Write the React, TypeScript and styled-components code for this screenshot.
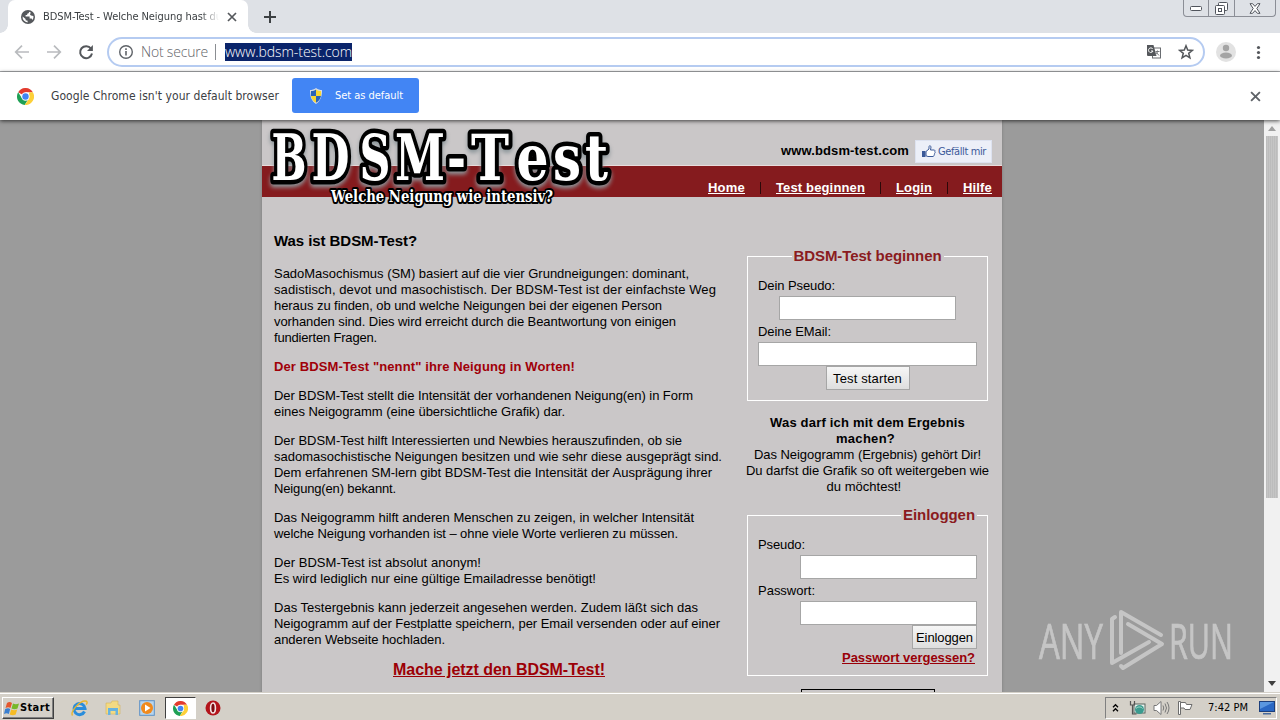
import React, { useLayoutEffect, useRef, useState } from "react";
import styled, { createGlobalStyle, css } from "styled-components";

const GlobalStyle = createGlobalStyle`
  * {
    box-sizing: border-box;
  }
  body {
    margin: 0;
    overflow: hidden;
  }
`;

const pageFont = `"Liberation Sans", Arial, sans-serif`;
const uiFont = `"DejaVu Sans Condensed", "DejaVu Sans", sans-serif`;
const lightFont = `"Open Sans", "Noto Sans", sans-serif`;

const FitSpan = styled.span`
  display: inline-block;
  white-space: pre;
  text-decoration: inherit;
`;

interface FitProps {
  width: number;
  children: string;
}

// spreads the letters of a line so that it takes up a given width
const Fit = ({ width, children }: FitProps) => {
  const ref = useRef<HTMLSpanElement>(null);
  const [spacing, setSpacing] = useState(0);

  useLayoutEffect(() => {
    if (!ref.current) return;
    ref.current.style.letterSpacing = "0px";
    const natural = ref.current.getBoundingClientRect().width;
    const next = (width - natural) / children.length;
    ref.current.style.letterSpacing = `${next}px`;
    setSpacing(next);
  }, [width, children]);

  return (
    <FitSpan ref={ref} style={{ letterSpacing: `${spacing}px` }}>
      {children}
    </FitSpan>
  );
};

const Screen = styled.div`
  display: flex;
  flex-direction: column;
  width: 1280px;
  height: 720px;
  overflow: hidden;
  background: #9b9b9b;
  color: #000;
  font-family: ${pageFont};
`;

/* ---------- browser ---------- */

const TabStrip = styled.div`
  position: relative;
  display: flex;
  flex: none;
  height: 33px;
  padding-left: 8px;
  background: #dee1e6;
`;

const Tab = styled.div`
  position: relative;
  display: flex;
  align-items: center;
  width: 240px;
  padding-left: 13px;
  border-radius: 7px 7px 0 0;
  background: #fff;
  color: #3c4043;
  font: 11px/16px ${uiFont};

  &::before,
  &::after {
    content: "";
    position: absolute;
    bottom: 0;
    width: 8px;
    height: 8px;
  }
  &::before {
    left: -8px;
    background: radial-gradient(circle at 0 0, #dee1e6 7.5px, #fff 8px);
  }
  &::after {
    right: -8px;
    background: radial-gradient(circle at 100% 0, #dee1e6 7.5px, #fff 8px);
  }
`;

const TabTitle = styled.div`
  width: 176px;
  margin-left: 8px;
  overflow: hidden;
  white-space: nowrap;
  mask-image: linear-gradient(to right, #000 158px, transparent 176px);
`;

const TabClose = styled.div`
  display: flex;
  margin-left: 8px;
`;

const NewTab = styled.div`
  display: flex;
  align-items: center;
  margin-left: 15px;
`;

const WindowButtons = styled.div`
  position: absolute;
  top: 0;
  right: 4px;
  display: flex;
  height: 17px;
  border: 1px solid #8b8e96;
  border-top: 0;
  border-radius: 0 0 4px 4px;
`;

const WindowButton = styled.div<{ $width: number }>`
  display: flex;
  align-items: center;
  justify-content: center;
  width: ${(p) => p.$width}px;

  & + & {
    border-left: 1px solid #8b8e96;
  }
`;

const Toolbar = styled.div`
  display: flex;
  flex: none;
  align-items: center;
  height: 39px;
  padding: 0 12px 0 13px;
  border-bottom: 1px solid #a9abae;
  background: #fff;
`;

const NavIcons = styled.div`
  display: flex;
  gap: 14px;
  width: 94px;
`;

const AddressBar = styled.div`
  display: flex;
  align-items: center;
  width: 1098px;
  height: 30px;
  padding: 0 9px 0 9px;
  border: 2px solid #b5cbf1;
  border-radius: 15px;
  color: #5f6368;
  font: 300 14px/18px ${lightFont};
`;

const NotSecure = styled.div`
  margin-left: 7px;
`;

const Divider = styled.div`
  width: 1px;
  height: 16px;
  margin: 0 9px 0 7px;
  background: #8b8e92;
`;

const SelectedUrl = styled.div`
  height: 18px;
  margin-right: auto;
  background: #0a246a;
  color: #fff;
`;

const BarIcon = styled.div<{ $left: number }>`
  display: flex;
  margin-left: ${(p) => p.$left}px;
`;

const InfoBar = styled.div`
  position: relative;
  z-index: 1;
  display: flex;
  flex: none;
  align-items: center;
  height: 48px;
  padding: 0 19px 0 17px;
  background: #fff;
  box-shadow: 0 1px 4px rgba(0, 0, 0, 0.7);
  color: #3c4043;
  font: 12px/16px ${uiFont};
`;

const InfoText = styled.div`
  margin: 0 13px 0 17px;
`;

const DefaultButton = styled.div`
  display: flex;
  align-items: center;
  gap: 11px;
  width: 127px;
  height: 35px;
  margin: 0 auto 1px 0;
  padding-left: 16px;
  border-radius: 3px;
  background: #4285f4;
  color: #fff;
  font-size: 11px;
`;

/* ---------- page ---------- */

const Viewport = styled.div`
  position: relative;
  display: flex;
  flex: 1;
  min-height: 0;
  overflow: hidden;
`;

const PageArea = styled.div`
  flex: 1;
  padding-left: 262px;
`;

const Column = styled.div`
  position: relative;
  width: 740px;
  height: 580px;
  background: #cac7c8;
  box-shadow: 0 0 3px rgba(0, 0, 0, 0.2);
`;

const Header = styled.div`
  display: flex;
  justify-content: flex-end;
  height: 46px;
  padding: 20px 10px 0 0;
  border-bottom: 1px solid #e9dcdc;
  font: bold 13px/21px ${pageFont};
`;

const LikeButton = styled.div`
  display: flex;
  align-items: center;
  gap: 2px;
  width: 77px;
  height: 23px;
  margin-left: 6px;
  padding-left: 6px;
  border: 1px solid #dde2f0;
  background: #eceff8;
  color: #3b5998;
  font: 11px/16px ${uiFont};
`;

const Nav = styled.div`
  display: flex;
  justify-content: flex-end;
  height: 31px;
  padding: 14px 10px 0 0;
  background: #851b1e;
  font: bold 13px/16px ${pageFont};

  a {
    height: 16px;
    color: #fff;
    text-decoration: underline;
  }
`;

const NavSeparator = styled.div`
  width: 1px;
  height: 12px;
  margin: 2px 15px 0;
  background: #2c0809;
`;

const Logo = styled.svg`
  position: absolute;
  top: 0;
  left: 0;
`;

const LogoTitle = styled.text`
  filter: drop-shadow(0 3px 2px #8b9599);
`;

const Content = styled.div`
  display: flex;
  padding: 36px 0 0 12px;
  font-size: 13px;
  line-height: 16px;
`;

const Article = styled.div`
  width: 450px;
`;

const Heading = styled.h1`
  margin: 0 0 17px;
  font-size: 15px;
  line-height: 16px;
`;

const Paragraph = styled.p<{ $accent?: boolean }>`
  margin: 0 0 13px;
  white-space: nowrap;
  ${(p) =>
    p.$accent &&
    css`
      color: #a00008;
      font-weight: bold;
    `}
`;

const Line = styled.div`
  height: 16px;
`;

const BigLink = styled.a`
  display: block;
  width: 450px;
  color: #9c0006;
  font-size: 16px;
  line-height: 18px;
  font-weight: bold;
  text-align: center;
  text-decoration: underline;
`;

const Sidebar = styled.div`
  width: 241px;
  margin: 15px 0 0 23px;
`;

const Box = styled.fieldset<{ $height: number; $align: "center" | "right" }>`
  height: ${(p) => p.$height}px;
  margin: 0 0 14px;
  padding: 14px 10px 0;
  border: 1px solid #fff;
  text-align: ${(p) => p.$align};

  legend {
    height: 16px;
    padding: 0 2px;
    margin: ${(p) => (p.$align === "center" ? "0 auto" : "0 0 0 auto")};
    color: #8a1b20;
    font-size: 15px;
    font-weight: bold;
    line-height: 16px;
  }
`;

const Label = styled.label`
  display: block;
  height: 16px;
  margin-bottom: 2px;
  text-align: left;
`;

const Input = styled.input<{ $width: number; $last?: boolean }>`
  display: block;
  width: ${(p) => p.$width}px;
  height: 24px;
  margin: 0 0 ${(p) => (p.$last ? 0 : 4)}px auto;
  border: 1px solid #a6a6a6;
  background: #fff;
`;

const FirstInput = styled(Input)`
  margin-right: 21px;
`;

const SubmitButton = styled.button<{ $width: number }>`
  display: block;
  width: ${(p) => p.$width}px;
  height: 24px;
  margin: 0 0 1px auto;
  padding: 1px 0 0;
  border: 1px solid #a6a6a6;
  background: linear-gradient(#f6f6f6, #dedede);
  font: 13px/21px ${pageFont};
`;

const StartTestButton = styled(SubmitButton)`
  margin: 0 auto;
`;

const ForgotLink = styled.a`
  display: block;
  margin-right: 2px;
  color: #990008;
  font-weight: bold;
  text-decoration: underline;
`;

const Notice = styled.div`
  display: flex;
  flex-direction: column;
  align-items: center;
  width: 243px;
  margin: 0 -1px 12px;
`;

const Banner = styled.div`
  width: 134px;
  height: 40px;
  margin: -1px auto 0;
  border: 1px solid #000;
`;

const ScrollBar = styled.div`
  display: flex;
  flex-direction: column;
  align-items: center;
  width: 16px;
  padding: 6px 0 6px;
  background: #f1f1f1;
`;

const Thumb = styled.div`
  width: 12px;
  height: 362px;
  margin: 5px 0 auto;
  background: repeating-linear-gradient(to right, #bcbcbc 0 1px, #c5c5c5 1px 2px);
`;

const Watermark = styled.svg`
  position: absolute;
  left: 1030px;
  top: 482px;
  opacity: 0.6;
`;

/* ---------- taskbar ---------- */

const TaskBar = styled.div`
  display: flex;
  flex: none;
  align-items: center;
  height: 28px;
  padding: 3px 3px 0 2px;
  border-top: 1px solid #d4d0c8;
  background: #d4d0c8;
  box-shadow: inset 0 1px 0 #fff;
  font: 11px/16px ${uiFont};
`;

const StartButton = styled.div`
  display: flex;
  align-items: center;
  width: 52px;
  height: 22px;
  padding-left: 1px;
  border: 1px solid;
  border-color: #fff #404040 #404040 #fff;
  box-shadow: inset -1px -1px 0 #808080;
  font-weight: bold;
`;

const QuickLaunch = styled.div`
  display: flex;
  align-items: center;
  margin: 0 auto 0 9px;
`;

const TaskIcon = styled.div<{ $active?: boolean }>`
  display: flex;
  align-items: center;
  justify-content: center;
  width: ${(p) => (p.$active ? 31 : 33.5)}px;
  height: 22px;
  ${(p) =>
    p.$active &&
    css`
      margin: 0 1px;
      border: 1px solid;
      border-color: #404040 #fff #fff #404040;
      background: #fff;
    `}
`;

const Tray = styled.div`
  display: flex;
  align-items: center;
  width: 172px;
  height: 22px;
  padding-left: 6px;
  border: 1px solid;
  border-color: #808080 #fff #fff #808080;
`;

const Clock = styled.div`
  margin: 0 11px 0 15px;
`;

const ChromeIcon = ({ size = 17 }: { size?: number }) => (
  <svg width={size} height={size} viewBox="0 0 18 18">
    <circle cx="9" cy="9" r="9" fill="#fff" />
    <path d="M9 9 1.2 4.5A9 9 0 0 1 16.8 4.5L9 4.6Z" fill="#e33b2e" />
    <path d="M1.2 4.5A9 9 0 0 0 8.2 18l4.1-7-3.3-2-3.5 2.2Z" fill="#1fa055" />
    <path d="M16.8 4.5A9 9 0 0 1 8.2 18l4.6-7V4.5Z" fill="#fdd039" />
    <circle cx="9" cy="9" r="4.4" fill="#fff" />
    <circle cx="9" cy="9" r="3.4" fill="#4285f4" />
  </svg>
);

const Cross = ({ size, color }: { size: number; color: string }) => (
  <svg width={size} height={size} viewBox="0 0 10 10">
    <path d="M1 1l8 8M9 1 1 9" stroke={color} strokeWidth="1.7" />
  </svg>
);

const Browser = () => (
  <>
    <TabStrip>
      <Tab>
        <svg width="14" height="14" viewBox="0 0 14 14">
          <circle cx="7" cy="7" r="7" fill="#55585c" />
          <path
            d="M1.6 6.4 4.6 9v1.2l2 .6v1.6A5.5 5.5 0 0 1 1.6 6.4ZM8 1.7c.2 1.3-.5 1.7-1.5 1.8L6 5H4.6v1.4h4v2h2l1 1.5A5.5 5.5 0 0 0 12.4 6L10 5.5l-1-1 .8-2Z"
            fill="#fff"
          />
        </svg>
        <TabTitle>
          <Fit width={179}>BDSM-Test - Welche Neigung hast du</Fit>
        </TabTitle>
        <TabClose>
          <Cross size={10} color="#55585c" />
        </TabClose>
      </Tab>
      <NewTab>
        <svg width="14" height="14" viewBox="0 0 14 14">
          <path d="M7 1v12M1 7h12" stroke="#3c4043" strokeWidth="2" />
        </svg>
      </NewTab>
      <WindowButtons>
        <WindowButton $width={24}>
          <svg width="12" height="5" viewBox="0 0 12 5">
            <rect x=".5" y=".5" width="11" height="4" rx="1" fill="#fff" stroke="#50545c" />
          </svg>
        </WindowButton>
        <WindowButton $width={26}>
          <svg width="13" height="13" viewBox="0 0 13 13">
            <rect x="3.5" y=".5" width="9" height="8" rx="1" fill="#fff" stroke="#50545c" />
            <rect x=".5" y="3.5" width="9" height="9" rx="1" fill="#fff" stroke="#50545c" />
            <rect x="3.5" y="6.5" width="3" height="3" fill="#fff" stroke="#50545c" />
          </svg>
        </WindowButton>
        <WindowButton $width={41}>
          <svg width="12" height="11" viewBox="0 0 12 11">
            <path
              d="M1 .7h2.6L6 3.4 8.4.7H11L7.8 5.5 11 10.3H8.4L6 7.6 3.6 10.3H1L4.2 5.5Z"
              fill="#fff"
              stroke="#50545c"
            />
          </svg>
        </WindowButton>
      </WindowButtons>
    </TabStrip>

    <Toolbar>
      <NavIcons>
        <svg width="18" height="18" viewBox="0 0 18 18" fill="none" stroke="#b9bbbe" strokeWidth="1.7">
          <path d="M16 9H3M9 2.7 2.7 9 9 15.3" />
        </svg>
        <svg width="18" height="18" viewBox="0 0 18 18" fill="none" stroke="#b9bbbe" strokeWidth="1.7">
          <path d="M2 9h13M9 2.7 15.3 9 9 15.3" />
        </svg>
        <svg width="18" height="18" viewBox="0 0 18 18" fill="none" stroke="#54575b" strokeWidth="2">
          <path d="M14 5.6A6 6 0 1 0 15 10.5" />
          <path d="M15.9 2v6H10Z" fill="#54575b" stroke="none" />
        </svg>
      </NavIcons>
      <AddressBar>
        <svg width="16" height="16" viewBox="0 0 16 16">
          <circle cx="8" cy="8" r="6.3" fill="none" stroke="#5f6368" strokeWidth="1.4" />
          <path d="M8 7v4.5M8 4.3v1.6" stroke="#5f6368" strokeWidth="1.6" />
        </svg>
        <NotSecure>
          <Fit width={67}>Not secure</Fit>
        </NotSecure>
        <Divider />
        <SelectedUrl>
          <Fit width={127}>www.bdsm-test.com</Fit>
        </SelectedUrl>
        <svg width="16" height="16" viewBox="0 0 16 16">
          <rect x="6.5" y="4" width="8" height="10" fill="#fff" stroke="#6a6d71" />
          <path d="M1 1h6.5l3 11H2a1 1 0 0 1-1-1Z" fill="#54575b" />
          <path d="M6.8 5A2.3 2.3 0 1 0 7 7H5" fill="none" stroke="#fff" />
          <path d="M9.5 7.5h4M11.5 6.500v1c0 1-1 2.5-2 3M10.5 8.5l2.5 3" fill="none" stroke="#77797d" />
        </svg>
        <BarIcon $left={16}>
          <svg width="16" height="16" viewBox="0 0 16 16">
            <path
              d="m8 1.8 1.700 4.300 4.600.3-3.600 2.900 1.200 4.500L8 11.300l-3.900 2.500 1.200-4.500L1.700 6.400l4.600-.3Z"
              fill="none"
              stroke="#54575b"
              strokeWidth="1.5"
            />
          </svg>
        </BarIcon>
      </AddressBar>
      <BarIcon $left={11}>
        <svg width="20" height="20" viewBox="0 0 20 20">
          <circle cx="10" cy="10" r="10" fill="#e2e2e2" />
          <circle cx="10" cy="6" r="3.2" fill="#a4a4a4" />
          <ellipse cx="10" cy="13.5" rx="6" ry="3" fill="#a4a4a4" />
        </svg>
      </BarIcon>
      <BarIcon $left={20}>
        <svg width="5" height="15" viewBox="0 0 5 15" fill="#54575b">
          <circle cx="2.5" cy="2.5" r="1.6" />
          <circle cx="2.5" cy="7.5" r="1.6" />
          <circle cx="2.5" cy="12.5" r="1.6" />
        </svg>
      </BarIcon>
    </Toolbar>

    <InfoBar>
      <ChromeIcon />
      <InfoText>
        <Fit width={228}>Google Chrome isn't your default browser</Fit>
      </InfoText>
      <DefaultButton>
        <svg width="16" height="16" viewBox="0 0 16 16">
          <path d="M8 0c2 1.6 4 2 6 2 .3 6-1.500 11-6 14C3.500 13 1.700 8 2 2c2 0 4-.4 6-2Z" fill="#d7dde6" />
          <path d="M8 1.500V8H3C2.800 6 2.900 4.500 3 3c2 0 3.500-.5 5-1.500ZM8 8h5c-.5 3-2 5-5 6.800Z" fill="#2b63b8" />
          <path d="M8 1.500c1.500 1 3 1.500 5 1.500.1 1.500.2 3 0 5H8ZM8 8v6.800C5 13 3.500 11 3 8Z" fill="#f7d633" />
        </svg>
        <Fit width={68}>Set as default</Fit>
      </DefaultButton>
      <Cross size={11} color="#5f6368" />
    </InfoBar>
  </>
);

const article: [string, number][][] = [
  [
    ["SadoMasochismus (SM) basiert auf die vier Grundneigungen: dominant,", 415],
    ["sadistisch, devot und masochistisch. Der BDSM-Test ist der einfachste Weg", 442],
    ["heraus zu finden, ob und welche Neigungen bei der eigenen Person", 388],
    ["vorhanden sind. Dies wird erreicht durch die Beantwortung von einigen", 402],
    ["fundierten Fragen.", 103],
  ],
  [['Der BDSM-Test "nennt" ihre Neigung in Worten!', 301]],
  [
    ["Der BDSM-Test stellt die Intensität der vorhandenen Neigung(en) in Form", 419],
    ["eines Neigogramm (eine übersichtliche Grafik) dar.", 291],
  ],
  [
    ["Der BDSM-Test hilft Interessierten und Newbies herauszufinden, ob sie", 408],
    ["sadomasochistische Neigungen besitzen und wie sehr diese ausgeprägt sind.", 448],
    ["Dem erfahrenen SM-lern gibt BDSM-Test die Intensität der Ausprägung ihrer", 438],
    ["Neigung(en) bekannt.", 122],
  ],
  [
    ["Das Neigogramm hilft anderen Menschen zu zeigen, in welcher Intensität", 420],
    ["welche Neigung vorhanden ist – ohne viele Worte verlieren zu müssen.", 404],
  ],
  [
    ["Der BDSM-Test ist absolut anonym!", 207],
    ["Es wird lediglich nur eine gültige Emailadresse benötigt!", 322],
  ],
  [
    ["Das Testergebnis kann jederzeit angesehen werden. Zudem läßt sich das", 424],
    ["Neigogramm auf der Festplatte speichern, per Email versenden oder auf einer", 446],
    ["anderen Webseite hochladen.", 171],
  ],
];

// letter, left edge, width
const logoLetters: [string, number, number][] = [
  ["B", 9.5, 35],
  ["D", 49.5, 38],
  ["S", 97.5, 31],
  ["M", 133, 50],
  ["-", 185, 19],
  ["T", 209, 38],
  ["e", 254.5, 32],
  ["s", 291, 28],
  ["t", 323, 23],
];

const PageLogo = () => (
  <Logo width="360" height="92" viewBox="0 0 360 92">
    <g
      fontFamily="'DejaVu Serif Condensed', 'DejaVu Serif', serif"
      fontWeight="bold"
      fill="#fff"
      stroke="#000"
      strokeLinejoin="round"
      paintOrder="stroke"
    >
      <LogoTitle y="60" fontSize="64" strokeWidth="9">
        {logoLetters.map(([letter, x, width]) => (
          <tspan key={x} x={x} textLength={width} lengthAdjust="spacingAndGlyphs">
            {letter}
          </tspan>
        ))}
      </LogoTitle>
      <text x="69" y="82" fontSize="17" strokeWidth="4" textLength="222" lengthAdjust="spacingAndGlyphs">
        Welche Neigung wie intensiv?
      </text>
    </g>
  </Logo>
);

const Page = () => (
  <Viewport>
    <PageArea>
      <Column>
        <Header>
          <Fit width={128}>www.bdsm-test.com</Fit>
          <LikeButton>
            <svg width="14" height="14" viewBox="0 0 14 14">
              <path d="M4 6.5 7 4V1.500c0-1 2-1 2 .5L8.500 5H12c1 0 1.300 1 .8 1.700.5.5.4 1.300-.2 1.700.3.600 0 1.200-.6 1.500.2.800-.3 1.600-1 1.600H6L4 10.800Z" fill="#fff" stroke="#3b5998" />
              <rect x="0" y="6" width="3.5" height="6" fill="#3b5998" />
            </svg>
            <Fit width={48}>Gefällt mir</Fit>
          </LikeButton>
        </Header>
        <Nav>
          <a><Fit width={37}>Home</Fit></a>
          <NavSeparator />
          <a><Fit width={89}>Test beginnen</Fit></a>
          <NavSeparator />
          <a><Fit width={36}>Login</Fit></a>
          <NavSeparator />
          <a><Fit width={29}>Hilfe</Fit></a>
        </Nav>
        <PageLogo />

        <Content>
          <Article>
            <Heading>
              <Fit width={143}>Was ist BDSM-Test?</Fit>
            </Heading>
            {article.map((lines, i) => (
              <Paragraph key={i} $accent={i === 1}>
                {lines.map(([text, width]) => (
                  <Line key={text}>
                    <Fit width={width}>{text}</Fit>
                  </Line>
                ))}
              </Paragraph>
            ))}
            <BigLink>
              <Fit width={212}>Mache jetzt den BDSM-Test!</Fit>
            </BigLink>
          </Article>

          <Sidebar>
            <Box $height={153} $align="center">
              <legend>
                <Fit width={148}>BDSM-Test beginnen</Fit>
              </legend>
              <Label>
                <Fit width={77}>Dein Pseudo:</Fit>
              </Label>
              <FirstInput $width={177} />
              <Label>
                <Fit width={73}>Deine EMail:</Fit>
              </Label>
              <Input $width={219} $last />
              <StartTestButton $width={84}>
                <Fit width={69}>Test starten</Fit>
              </StartTestButton>
            </Box>

            <Notice>
              <b><Fit width={195}>Was darf ich mit dem Ergebnis</Fit></b>
              <b><Fit width={63}>{"machen? "}</Fit></b>
              <Fit width={227}>Das Neigogramm (Ergebnis) gehört Dir!</Fit>
              <Fit width={243}>Du darfst die Grafik so oft weitergeben wie</Fit>
              <Fit width={82}>{"du möchtest!  "}</Fit>
            </Notice>

            <Box $height={169} $align="right">
              <legend>
                <Fit width={72}>Einloggen</Fit>
              </legend>
              <Label>
                <Fit width={47}>Pseudo:</Fit>
              </Label>
              <Input $width={177} />
              <Label>
                <Fit width={57}>Passwort:</Fit>
              </Label>
              <Input $width={177} $last />
              <SubmitButton $width={65}>
                <Fit width={57}>Einloggen</Fit>
              </SubmitButton>
              <ForgotLink>
                <Fit width={133}>Passwort vergessen?</Fit>
              </ForgotLink>
            </Box>
            <Banner />
          </Sidebar>
        </Content>
      </Column>
    </PageArea>

    <ScrollBar>
      <svg width="8" height="5" viewBox="0 0 8 5">
        <path d="M0 5 4 0l4 5Z" fill="#a0a0a0" />
      </svg>
      <Thumb />
      <svg width="8" height="5" viewBox="0 0 8 5">
        <path d="M0 0h8L4 5Z" fill="#404040" />
      </svg>
    </ScrollBar>

    <Watermark width="230" height="76" viewBox="0 0 230 76">
      <g
        fill="#e2e2e2"
        stroke="#e2e2e2"
        strokeWidth=".7"
        fontFamily="'Open Sans', 'Noto Sans', sans-serif"
        fontSize="50"
      >
        <text x="9" y="57" textLength="64" lengthAdjust="spacingAndGlyphs">ANY</text>
        <text x="139" y="57" textLength="64" lengthAdjust="spacingAndGlyphs">RUN</text>
      </g>
      <g fill="none" stroke="#e2e2e2" strokeWidth="4" strokeLinejoin="round" strokeLinecap="round">
        <path d="M91 51V10l40 23" />
        <path d="M85 15l-3 2v44l37-21" />
        <path d="M98 22l34 20-39 24-2-2" />
      </g>
    </Watermark>
  </Viewport>
);

const Taskbar = () => (
  <TaskBar>
    <StartButton>
      <svg width="16" height="15" viewBox="0 0 16 15">
        <path d="M3 2c2-1.5 3.5-1 5 0L6.500 7c-1.5-1-3-1-5 0Z" fill="#e4572e" />
        <path d="M9 2.5c2 1 3.500 1 6 0l-1.500 5c-2 1-4 1-6 0Z" fill="#77b82a" />
        <path d="M1.200 8c2-1 3.500-1 5 0l-1.400 5c-1.500-1-3-1-4.800 0Z" fill="#3a7fd0" />
        <path d="M7.200 8.500c2 1 4 1 6 0l-1.500 5c-2 1-4 1-6 0Z" fill="#f6bb23" />
      </svg>
      <Fit width={30}>Start</Fit>
    </StartButton>
    <QuickLaunch>
      <TaskIcon>
        <svg width="17" height="17" viewBox="0 0 17 17">
          <path d="M13.500 11.500A5.500 5.500 0 1 1 14 8.500H4" fill="none" stroke="#2a8ddb" strokeWidth="3" />
          <path d="M1.500 15.500C-1 12 9-.5 15.500 1.200c1 .8.5 2.300-.3 3.500" fill="none" stroke="#e8b52c" strokeWidth="1.4" />
        </svg>
      </TaskIcon>
      <TaskIcon>
        <svg width="16" height="16" viewBox="0 0 16 16">
          <path d="M1 3h5l1-2h6v4h2v9H1Z" fill="#f3da83" stroke="#d3b45c" strokeWidth=".6" />
          <path d="M3 15V8h10v7h-2.500v-4h-5v4Z" fill="#68b3df" />
        </svg>
      </TaskIcon>
      <TaskIcon>
        <svg width="16" height="16" viewBox="0 0 16 16">
          <rect x=".7" y=".7" width="14.6" height="14.6" fill="#b7d5ee" stroke="#5c91c6" />
          <circle cx="8" cy="8" r="6" fill="#f08a1d" />
          <path d="M6 4.500 11.500 8 6 11.500Z" fill="#fff" />
        </svg>
      </TaskIcon>
      <TaskIcon $active>
        <ChromeIcon size={15} />
      </TaskIcon>
      <TaskIcon>
        <svg width="16" height="16" viewBox="0 0 16 16">
          <circle cx="8" cy="8" r="7.5" fill="#b3141b" />
          <ellipse cx="8" cy="8" rx="2.4" ry="5" fill="#7c0a10" stroke="#f4e5e5" strokeWidth="1.6" />
        </svg>
      </TaskIcon>
    </QuickLaunch>
    <Tray>
      <svg width="7" height="10" viewBox="0 0 7 10" fill="none" stroke="#000" strokeWidth="1.3">
        <path d="M1 4.200 3.500 1.700 6 4.200M1 8.200l2.500-2.500L6 8.200" />
      </svg>
      <BarIcon $left={10}>
        <svg width="17" height="16" viewBox="0 0 17 16">
          <rect x="5" y="4" width="11" height="9" fill="#e8f3ef" stroke="#59645f" />
          <circle cx="10.5" cy="9.5" r="4.5" fill="#3b9b8f" />
          <path d="M7 8.500c2-2 5-2 6.500 0" fill="none" stroke="#a9dccb" />
          <path d="M1.500 1v4h4V1M3.500 5v9h4" fill="none" stroke="#555" strokeWidth="1.2" />
        </svg>
      </BarIcon>
      <BarIcon $left={7}>
        <svg width="17" height="16" viewBox="0 0 17 16" fill="none" stroke="#777">
          <path d="M1 5.500h2.500L8 1.500v13L3.500 10.500H1Z" fill="#fff" />
          <path d="M10 5.500q1.500 2.500 0 5M12 3.500q3 4.500 0 9M14 2q4 6 0 12" />
        </svg>
      </BarIcon>
      <BarIcon $left={7}>
        <svg width="16" height="16" viewBox="0 0 16 16" fill="#fff" stroke="#6c6c6c">
          <path d="M1.500 1.500h2v13h-2Z" />
          <path d="M3.500 2.500h5l1 2h5.500l-2 5H8l-1-1.500H3.500Z" />
        </svg>
      </BarIcon>
      <Clock>
        <Fit width={40}>7:42 PM</Fit>
      </Clock>
      <svg width="16" height="14" viewBox="0 0 16 14">
        <rect x=".5" y=".5" width="15" height="10" fill="#2a68c4" stroke="#1c3f7c" />
        <path d="M1 1h14L1 8Z" fill="#5a97e0" />
        <path d="M4 12h8v1.500H4Z" fill="#486a9c" />
      </svg>
    </Tray>
  </TaskBar>
);

const App = () => (
  <Screen>
    <GlobalStyle />
    <Browser />
    <Page />
    <Taskbar />
  </Screen>
);

export default App;
